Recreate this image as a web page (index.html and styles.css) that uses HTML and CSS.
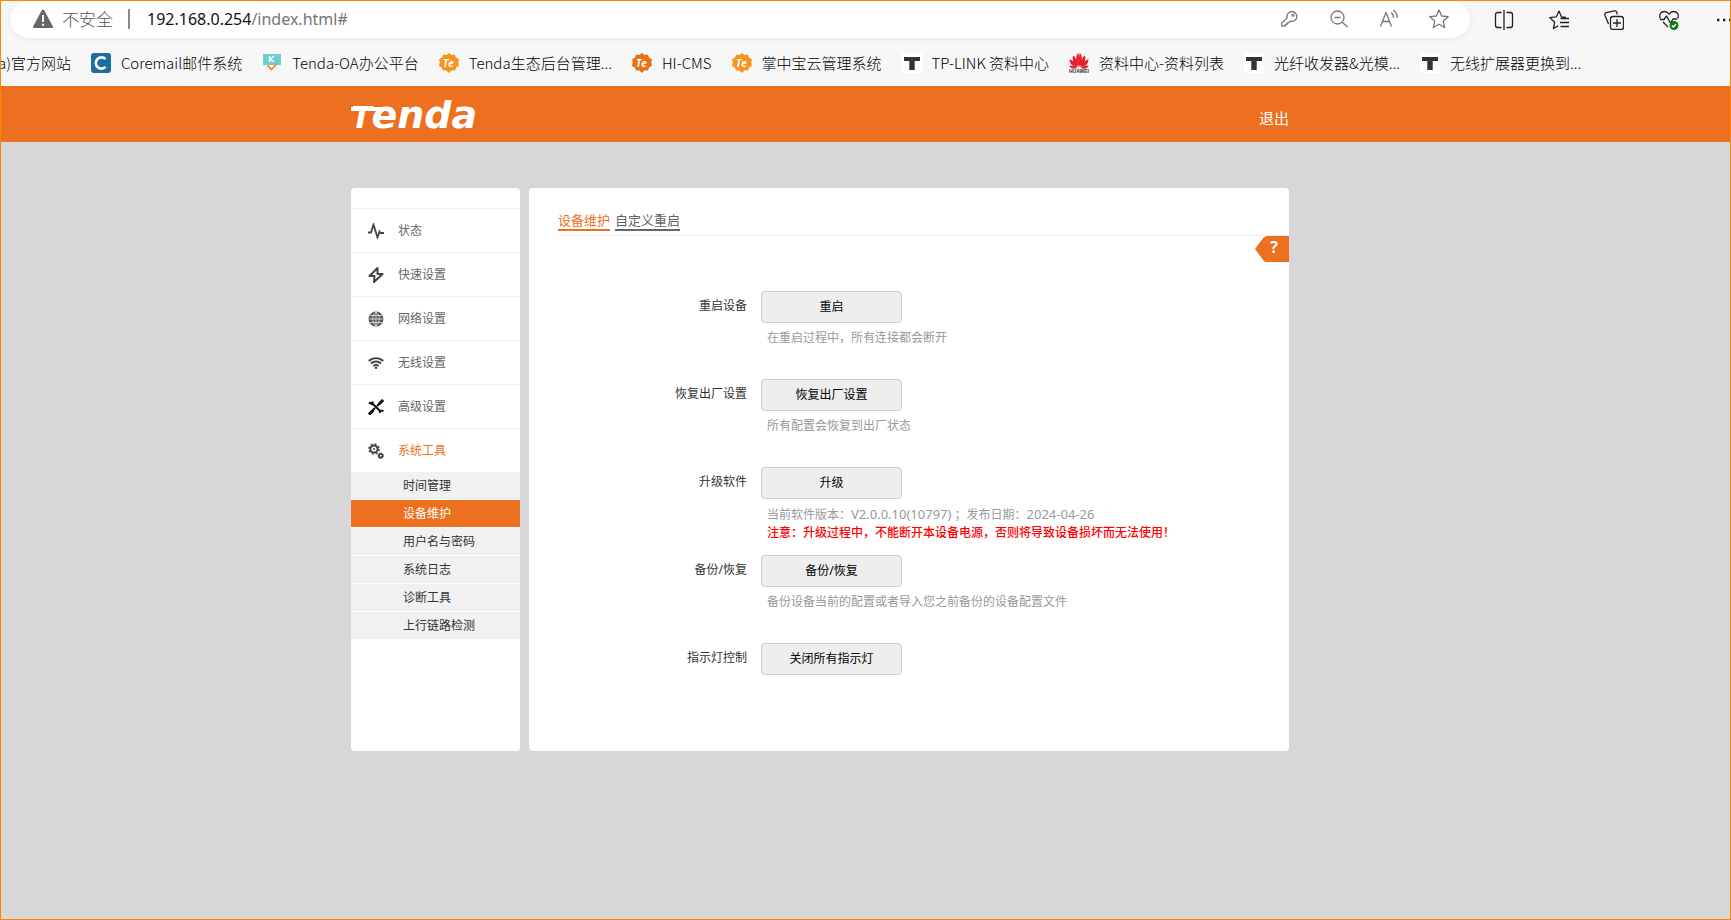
FILE: index.html
```html
<!DOCTYPE html>
<html lang="zh-CN">
<head>
<meta charset="utf-8">
<title>Tenda</title>
<link rel="stylesheet" href="styles.css">
</head>
<body>
<svg class="defs" aria-hidden="true">
  <symbol id="te" viewBox="0 0 20 20">
    <path d="M10 0l2.6 1.9 3.2-.3 1.2 3 2.9 1.6-.6 3.3.7 3.2-2.8 1.7-1.2 3-3.3-.1L10 20l-2.7-2.5-3.3.1-1.2-3L0 12.900l.7-3.300L.1 6.300 3 4.600l1.200-3 3.200.3z"/>
    <text x="9.500" y="13.500" class="badge-text">Te</text>
  </symbol>
  <symbol id="tp" viewBox="0 0 20 20">
    <rect width="20" height="20" fill="#fff"/>
    <path d="M2 4h16v4h-5.300v9H7.300V8H2z" fill="#333"/>
  </symbol>
</svg>
<div class="window">
  <div class="toolbar">
    <div class="address">
      <svg class="warn" viewBox="0 0 22 20"><path d="M9.800 1.200a1.400 1.400 0 0 1 2.400 0l8.600 16a1.200 1.200 0 0 1-1.100 1.800H2.300a1.200 1.200 0 0 1-1.100-1.800z" fill="#666"/><path d="M11 6v7M11 14.700v2" stroke="#fff" stroke-width="2"/></svg>
      <span class="insecure">不安全</span>
      <span class="bar"></span>
      <span class="url">192.168.0.254<span class="path">/index.html#</span></span>
      <div class="address-icons">
        <button aria-label="密码"><svg viewBox="0 0 20 20"><path d="M12.700 2.500a5 5 0 1 1-1.600 9.700L9.500 13.800H8v1.700H6.300v1.700H2.700v-3l5.400-5.300a5 5 0 0 1 4.600-6.400z"/><circle cx="14" cy="6.300" r=".9"/></svg></button>
        <button aria-label="缩小"><svg viewBox="0 0 20 20"><circle cx="8.500" cy="8.500" r="6.500"/><path d="M13.300 13.300L18.500 18M5.500 8.500h6"/></svg></button>
        <button aria-label="朗读"><svg viewBox="0 0 20 20"><path d="M1.500 17.500L7 3.500l5.500 14M3.500 12.500h7M12 3.500a6 6 0 0 1 2.500 5.300M14.200 1a9 9 0 0 1 4 8"/></svg></button>
        <button aria-label="收藏"><svg viewBox="0 0 20 20"><path d="M10 1l2.700 6 6.500.7-4.900 4.400 1.400 6.400L10 15.200l-5.700 3.300 1.400-6.400L.8 7.700 7.300 7z"/></svg></button>
      </div>
    </div>
    <div class="browser-icons">
      <button aria-label="拆分"><svg viewBox="0 0 20 20"><path d="M7.500 2.500h-4a2 2 0 0 0-2 2v11a2 2 0 0 0 2 2h4M12.500 2.500h4a2 2 0 0 1 2 2v11a2 2 0 0 1-2 2h-4M10 0v20"/></svg></button>
      <button aria-label="收藏夹"><svg viewBox="0 0 20 20"><path d="M17 7.500l-4.500-.6L10 1 7.300 6.900.8 7.700l4.900 4.400-1.300 6.400L9 15.900M11.500 8.500H20M11 12.500h9M11.500 16.500H20"/></svg></button>
      <button aria-label="集锦"><svg viewBox="0 0 20 20"><path d="M5 13.500l-.8-.2L.9 5.200a2 2 0 0 1 1.300-2.500L10.500.9a2 2 0 0 1 2.300 1.400l.5 2.200"/><rect x="6.500" y="6.500" width="13" height="13" rx="2.500"/><path d="M13 9v8M9 13h8"/></svg></button>
      <button aria-label="浏览器概要"><svg viewBox="0 0 20 20"><path d="M1.300 8.500C-.5 4 2.500 1.500 5.300 1.500c2 0 3.500 1 4.700 2.700 1.200-1.700 2.700-2.700 4.700-2.700 3 0 5.800 2.700 4 7M1 9.500h4L7.500 6l4 7 2.500-4h4M4 12l5 5"/><circle cx="15" cy="15.500" r="4.500" fill="#107c10" stroke="none"/><path d="M13 15.500l1.500 1.500 2.500-3" stroke="#fff"/></svg></button>
      <button aria-label="更多"><svg viewBox="0 0 20 20"><path d="M3 10h2.400M9 10h2.400M15 10h2.400" stroke-width="2.400"/></svg></button>
    </div>
  </div>

  <nav class="bookmarks">
    <a href="#">a)官方网站</a>
    <a href="#"><svg viewBox="0 0 20 20"><rect width="20" height="20" rx="3" fill="#1b6f9f"/><path d="M14.500 6.200A5.600 5.600 0 1 0 14.500 13.800" fill="none" stroke="#fff" stroke-width="2.600"/></svg>Coremail邮件系统</a>
    <a href="#"><svg viewBox="0 0 20 20"><rect x="1" y="1" width="18" height="18" fill="#f4f4f2"/><path d="M1 1h18v11H1z" fill="#6ccfd2"/><path d="M7.500 3v6M12 3L8 6.200 12 9" fill="none" stroke="#fff" stroke-width="1.500"/><path d="M5.500 12.500l4 4 5.500-6" fill="none" stroke="#ef8b2c" stroke-width="1.800"/></svg>Tenda-OA办公平台</a>
    <a href="#"><svg class="te-light"><use href="#te"/></svg>Tenda生态后台管理...</a>
    <a href="#"><svg class="te-dark"><use href="#te"/></svg>HI-CMS</a>
    <a href="#"><svg class="te-light"><use href="#te"/></svg>掌中宝云管理系统</a>
    <a href="#"><svg><use href="#tp"/></svg>TP-LINK 资料中心</a>
    <a href="#"><svg viewBox="0 0 20 20"><g fill="#e3202b"><path d="M9.700 14C7 9 6 3 9.200 0c1 3 1.200 9 .5 14zM10.300 14c2.700-5 3.700-11 .5-14-1 3-1.200 9-.5 14zM8.800 14.200C5 11 2.500 6 4.200 2.500 7 4.500 8.500 9 8.800 14.200zM11.200 14.200c3.800-3.200 6.300-8.200 4.600-11.700C13 4.500 11.500 9 11.200 14.200zM8.200 14.700C3.500 13.500 0 10 .7 6.300c3.300 1 6 4.400 7.500 8.400zM11.800 14.700c4.700-1.200 8.200-4.700 7.500-8.400-3.300 1-6 4.400-7.500 8.400zM8 15.300c-3.500 1-6.700.2-7.600-2.900 2.800-.2 5.600 1 7.600 2.900zM12 15.300c3.500 1 6.700.2 7.600-2.900-2.800-.2-5.600 1-7.600 2.900z"/></g><text x="0" y="20" class="huawei">HUAWEI</text></svg>资料中心-资料列表</a>
    <a href="#"><svg><use href="#tp"/></svg>光纤收发器&amp;光模...</a>
    <a href="#"><svg><use href="#tp"/></svg>无线扩展器更换到...</a>
  </nav>

  <header class="header">
    <div class="wrap">
      <span class="logo"><span class="logo-t">T</span>enda</span>
      <a class="logout" href="#">退出</a>
    </div>
  </header>

  <div class="content">
    <nav class="sidebar">
      <a class="item" href="#"><svg viewBox="0 0 16 16"><path d="M0 9.500h3L5.500 1.500l4 13 2-6 1 1.500H16" fill="none" stroke="#444" stroke-width="1.800"/></svg>状态</a>
      <a class="item" href="#"><svg viewBox="0 0 16 16"><path d="M9.500 1L1.500 9h5L6 15l8.500-8h-5z" fill="none" stroke="#444" stroke-width="2" stroke-linejoin="round"/></svg>快速设置</a>
      <a class="item" href="#"><svg viewBox="0 0 16 16"><circle cx="8" cy="8" r="7.500" fill="#555"/><path d="M8 1v14M1 8h14M2 4.500h12M2 11.500h12M8 1C3.500 5 3.500 11 8 15c4.500-4 4.500-10 0-14" fill="none" stroke="#ddd" stroke-width=".9"/></svg>网络设置</a>
      <a class="item" href="#"><svg viewBox="0 0 16 16"><path d="M.8 6a10.400 10.400 0 0 1 14.400 0M3 8.500a7.300 7.300 0 0 1 10 0M5.300 11a4 4 0 0 1 5.400 0" fill="none" stroke="#444" stroke-width="1.900"/><circle cx="8" cy="12.800" r="1.300" fill="#444"/></svg>无线设置</a>
      <a class="item" href="#"><svg viewBox="0 0 16 16"><path d="M4 4l9 9M1 3.500l3 1.500L5 2.500M11.500 14l1-2.500 3 .5M15 1l-6 6M7 9l-5.500 5.500" fill="none" stroke="#111" stroke-width="2"/><path d="M.8 15.500l4.500-4M11 5.200l4-4.200" stroke="#111" stroke-width="2.800"/></svg>高级设置</a>
      <a class="item current" href="#"><svg viewBox="0 0 16 16"><circle cx="6" cy="6" r="3.600" fill="none" stroke="#444" stroke-width="2"/><circle cx="6" cy="6" r="5" fill="none" stroke="#444" stroke-width="1.600" stroke-dasharray="1.960"/><circle cx="6" cy="6" r="1" fill="#444"/><circle cx="12.700" cy="12.700" r="1.800" fill="none" stroke="#444" stroke-width="1.800"/><circle cx="12.700" cy="12.700" r="2.800" fill="none" stroke="#444" stroke-width="1" stroke-dasharray="1.100"/></svg>系统工具</a>
      <div class="submenu">
        <a href="#">时间管理</a>
        <a href="#" class="active">设备维护</a>
        <a href="#">用户名与密码</a>
        <a href="#">系统日志</a>
        <a href="#">诊断工具</a>
        <a href="#">上行链路检测</a>
      </div>
    </nav>

    <main class="main">
      <div class="tabs">
        <a href="#" class="on">设备维护</a>
        <a href="#">自定义重启</a>
      </div>
      <button class="help" aria-label="帮助">?</button>
      <form class="form">
        <div class="row">
          <label for="reboot">重启设备</label>
          <div><button type="button" id="reboot">重启</button><p>在重启过程中，所有连接都会断开</p></div>
        </div>
        <div class="row">
          <label for="restore">恢复出厂设置</label>
          <div><button type="button" id="restore">恢复出厂设置</button><p>所有配置会恢复到出厂状态</p></div>
        </div>
        <div class="row">
          <label for="upgrade">升级软件</label>
          <div><button type="button" id="upgrade">升级</button><p>当前软件版本：<span class="latin">V2.0.0.10(10797)</span> ；发布日期：<span class="latin">2024-04-26</span></p><p class="alert">注意：升级过程中，不能断开本设备电源，否则将导致设备损坏而无法使用！</p></div>
        </div>
        <div class="row">
          <label for="backup">备份/恢复</label>
          <div><button type="button" id="backup">备份/恢复</button><p>备份设备当前的配置或者导入您之前备份的设备配置文件</p></div>
        </div>
        <div class="row">
          <label for="led">指示灯控制</label>
          <div><button type="button" id="led">关闭所有指示灯</button></div>
        </div>
      </form>
    </main>
  </div>
</div>
</body>
</html>
```
FILE: styles.css
```css
* { box-sizing: border-box; }

body {
  margin: 0;
  background: #d7d7d7;
  font-family: "Noto Sans", "Noto Sans CJK SC", sans-serif;
  font-size: 12px;
  line-height: 18px;
  color: #333;
}

a { color: inherit; text-decoration: none; }

button {
  font: inherit;
  color: inherit;
  padding: 0;
  border: 0;
  background: none;
  cursor: pointer;
}

p { margin: 0; }

.defs { position: absolute; width: 0; height: 0; }

.window {
  min-height: 100vh;
  border: 1px solid #ff8400;
  overflow: hidden;
}

/* Browser toolbar */
.toolbar {
  display: flex;
  justify-content: space-between;
  gap: 24px;
  height: 45px;
  padding-left: 9px;
  background: #f7f7f7;
  overflow: hidden;
}

.address {
  display: flex;
  flex: 1;
  align-items: center;
  height: 37px;
  padding: 0 21px 1px 22px;
  border-radius: 19px;
  background: #fff;
  box-shadow: 0 1px 6px rgba(0, 0, 0, .07);
}

.warn { width: 22px; height: 20px; }

.insecure {
  margin-left: 8px;
  font: 300 17px/24px "Noto Sans CJK SC", sans-serif;
  color: #555;
}

.bar {
  width: 2px;
  height: 20px;
  margin: 0 17px 0 15px;
  background: #888;
}

.url {
  font-size: 16px;
  line-height: 24px;
  color: #111;
}

.path { color: #767676; }

.address-icons, .browser-icons { display: flex; align-items: center; }

.address-icons { gap: 30px; margin-left: auto; color: #777; }

.browser-icons {
  gap: 35px;
  height: 37px;
  color: #222;
  margin-right: -4px;
}

.toolbar button { width: 20px; height: 20px; }

.toolbar button svg {
  display: block;
  width: 20px;
  height: 20px;
  fill: none;
  stroke: currentColor;
  stroke-width: 1.3;
  stroke-linejoin: round;
}

.bookmarks {
  display: flex;
  align-items: center;
  gap: 20px;
  height: 40px;
  padding-bottom: 6px;
  background: #f7f7f7;
  font: 300 15px/20px "Noto Sans CJK SC", sans-serif;
  color: #000;
  white-space: nowrap;
}

.bookmarks a { display: flex; align-items: center; gap: 10px; }

.bookmarks a:first-child { margin-left: -3px; }

.bookmarks svg { flex: none; width: 20px; height: 20px; }

.te-light { fill: #f7941e; }
.te-dark { fill: #e57317; }

.badge-text {
  font: italic bold 10px "Open Sans", sans-serif;
  fill: #fff;
  text-anchor: middle;
}

.huawei { font: bold 5px "Liberation Sans", sans-serif; fill: #333; }

/* Page header */
.header {
  padding-right: 91px;
  background: #ed7020;
  color: #fff;
}

.wrap {
  display: flex;
  align-items: center;
  justify-content: space-between;
  max-width: 938px;
  height: 56px;
  margin: 0 auto;
}

.logo {
  position: relative;
  margin-top: 4px;
  font: italic bold 38px/52px "DejaVu Sans", sans-serif;
}

/* Long left arm of the T */
.logo::before {
  content: "";
  position: absolute;
  top: 18px;
  left: 0;
  width: 36px;
  height: 4px;
  background: #fff;
}

.logo-t { font-size: 30px; }

.logout { margin-top: 7px; font-size: 15px; line-height: 20px; }

/* Panels */
.content {
  display: flex;
  justify-content: center;
  gap: 9px;
  min-height: 563px;
  margin-top: 46px;
  padding-right: 91px;
}

.sidebar, .main { border-radius: 4px; background: #fff; }

.sidebar { width: 169px; padding-top: 20px; padding-bottom: 110px; }

.item {
  display: flex;
  align-items: center;
  gap: 14px;
  height: 44px;
  padding: 1px 0 0 17px;
  border-top: 1px solid #eee;
  color: #666;
}

.item svg { width: 16px; height: 16px; }

.item.current { color: #ed7020; }

.submenu { display: grid; gap: 1px; }

.submenu a {
  height: 27px;
  padding-left: 52px;
  line-height: 28px;
  background: #f1f1f1;
}

.submenu .active { background: #ed7020; color: #fff; }

.main {
  display: flex;
  flex-direction: column;
  width: 760px;
  padding-top: 23px;
}

.tabs {
  display: flex;
  gap: 5px;
  margin-left: 29px;
  padding-bottom: 4px;
  border-bottom: 1px solid #eee;
  font-size: 13px;
  line-height: 18px;
  color: #666;
}

.tabs a { border-bottom: 2px solid #666; }

.tabs .on { border-color: #ed7020; color: #ed7020; }

.help {
  align-self: flex-end;
  width: 34px;
  height: 26px;
  padding: 0 0 4px 4px;
  background: #ed7020;
  clip-path: polygon(0 50%, 25% 6%, 35% 0, 100% 0, 100% 100%, 30% 100%, 25% 94%);
  color: #fff;
  font-size: 16px;
  font-weight: bold;
  line-height: 20px;
}

.form { margin-top: 29px; }

.row {
  display: grid;
  grid-template-columns: 218px 1fr;
  gap: 14px;
  min-height: 88px;
}

.row label {
  padding-top: 6px;
  text-align: right;
}

.row button {
  display: block;
  width: 141px;
  height: 32px;
  margin-bottom: 6px;
  border: 1px solid #ccc;
  border-radius: 4px;
  background: #eee;
  color: #000;
}

.row p { padding-left: 6px; color: #999; }

.latin { font-size: 13px; }

.row .alert { color: #f00; font-weight: 500; }
```
